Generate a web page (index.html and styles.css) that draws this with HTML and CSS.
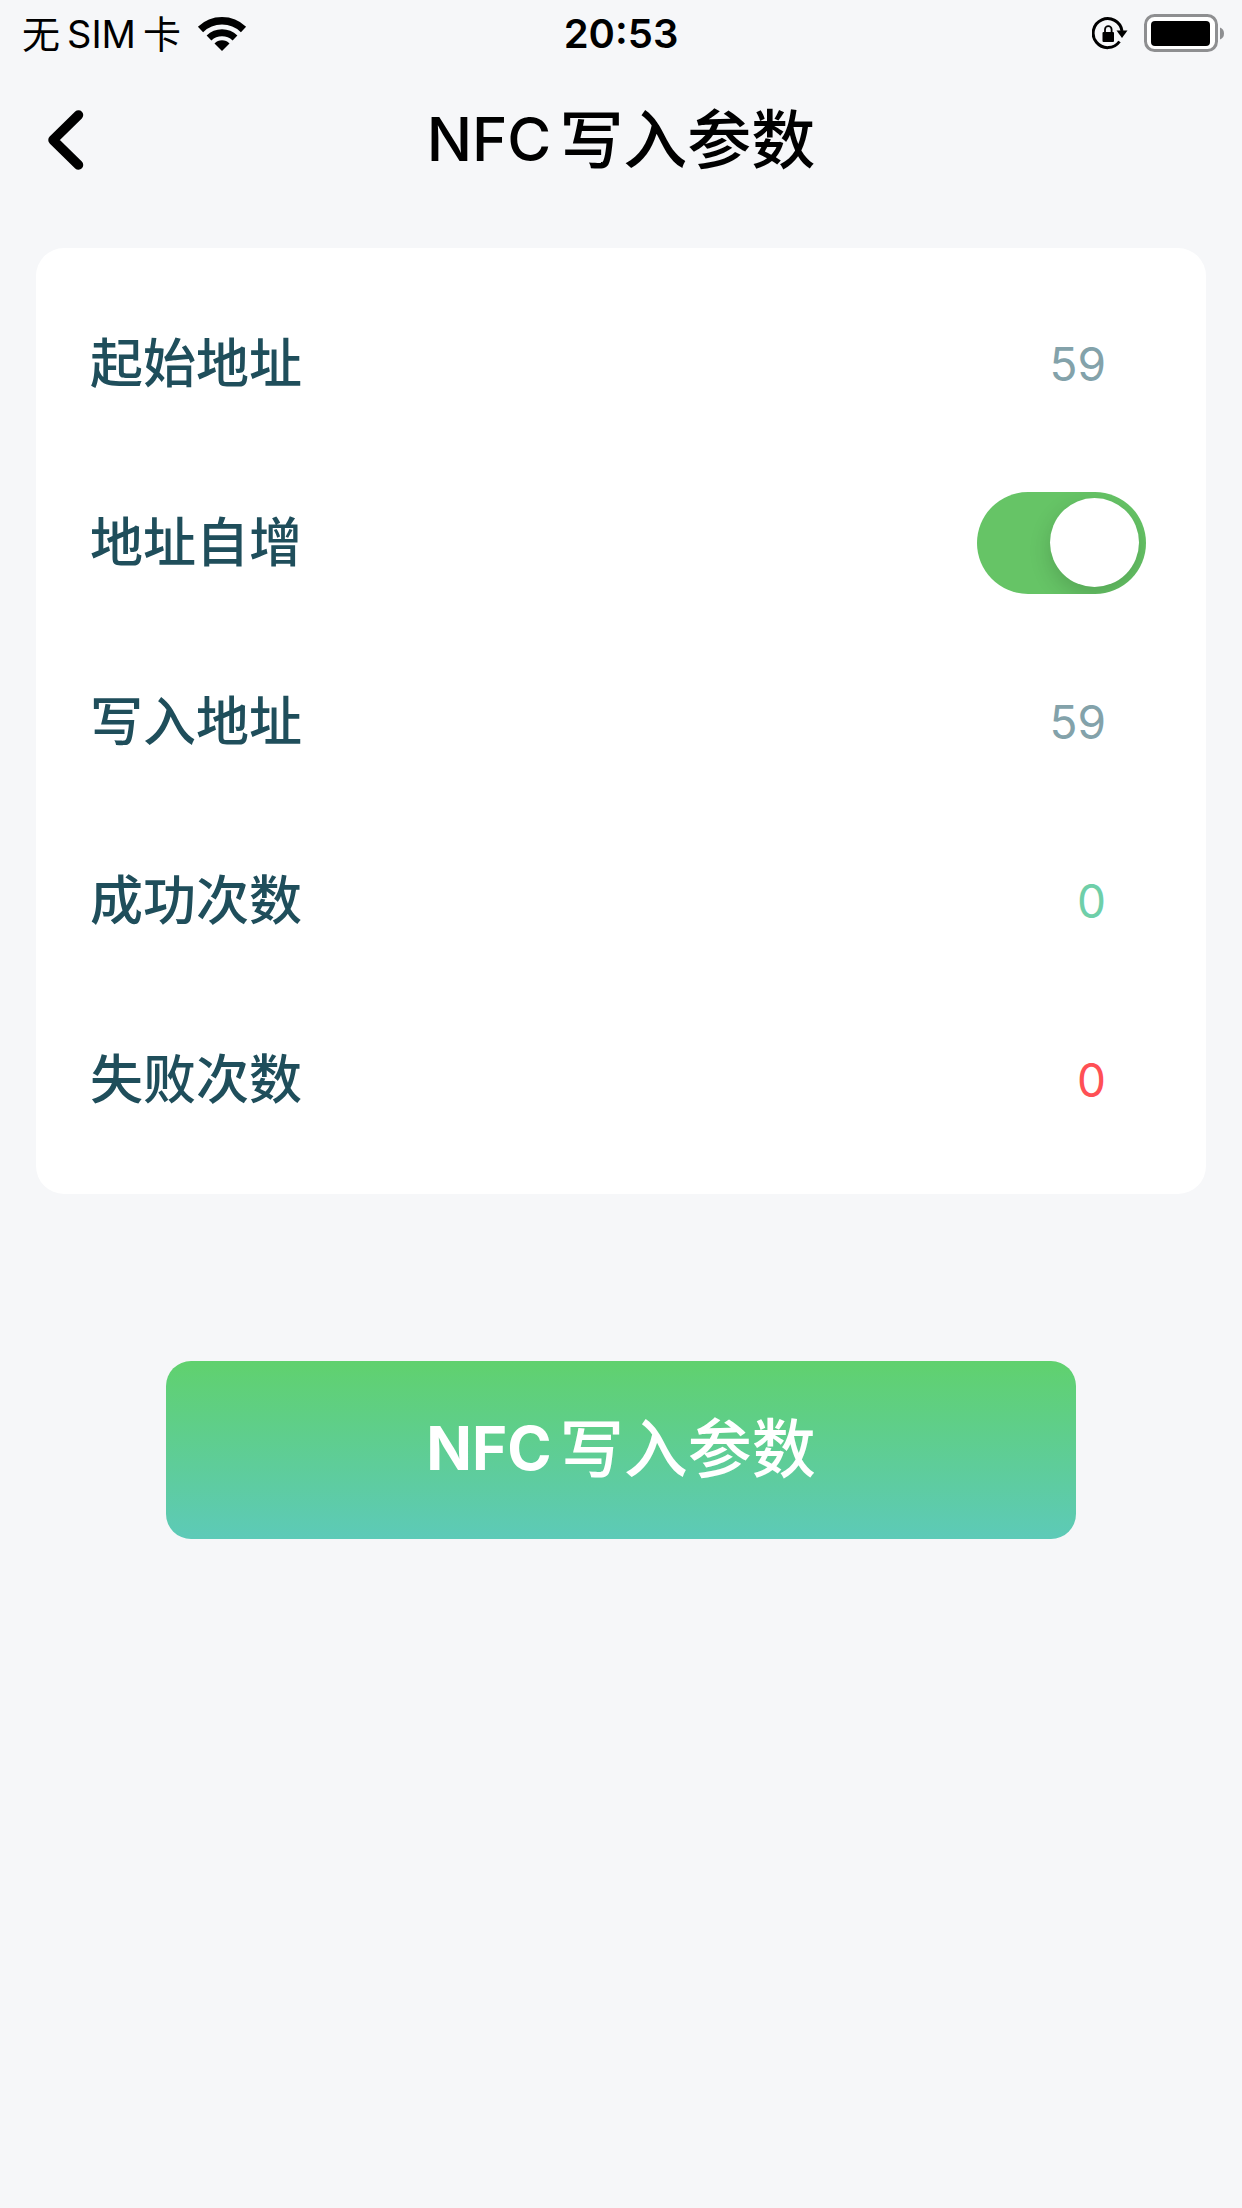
FILE: index.html
```html
<!DOCTYPE html>
<html lang="zh-CN">
<head>
    <meta charset="UTF-8">
    <meta name="viewport" content="width=device-width, initial-scale=1.0">
    <title>NFC写入参数</title>
    <link rel="stylesheet" href="styles.css">
</head>
<body>
    <div class="status-bar">
        <div class="status-left">
            <span class="carrier">无<span>SIM</span>卡</span>
            <svg width="50" height="38" viewBox="0 0 50 38" aria-hidden="true">
                <path d="M3.5 14.5A31 31 0 0 1 46.500 14.500" fill="none" stroke="#000" stroke-width="7.500"/>
                <path d="M12 23A19 19 0 0 1 38 23" fill="none" stroke="#000" stroke-width="7"/>
                <path d="M17.500 28.500A10.500 10.500 0 0 1 32.500 28.500L25 36z" fill="#000"/>
            </svg>
        </div>
        <span class="status-time">20:53</span>
        <div class="status-right">
            <svg width="36" height="34" viewBox="0 0 36 34" aria-hidden="true">
                <path d="M27.500 24.500A14.500 14.500 0 1 1 30 14" fill="none" stroke="#000" stroke-width="3"/>
                <path d="M24.500 13.500H35.500L30 21z" fill="#000"/>
                <rect x="10.500" y="15" width="11.500" height="10" rx="1" fill="#000"/>
                <path d="M13 16V12.500a3.300 3.300 0 0 1 6.600 0V16" fill="none" stroke="#000" stroke-width="1.800"/>
            </svg>
            <svg width="80" height="40" viewBox="0 0 80 40" aria-hidden="true">
                <rect x="1.500" y="1.500" width="71" height="35" rx="9" fill="#fff" stroke="#8e8f91" stroke-width="3"/>
                <rect x="7" y="7" width="59" height="25" rx="4" fill="#000"/>
                <path d="M76 13.500Q80 15 80 19.500T76 25.500z" fill="#8e8f91"/>
            </svg>
        </div>
    </div>

    <header class="nav-bar">
        <button class="back-button" type="button" aria-label="返回">
            <svg width="36" height="62" viewBox="0 0 36 62" aria-hidden="true">
                <path d="M30.500 6L5 31L30.500 56" fill="none" stroke="#000" stroke-width="9.500" stroke-linecap="round" stroke-linejoin="round"/>
            </svg>
        </button>
        <h1 class="nav-title"><span class="latin">NFC</span>写入参数</h1>
    </header>

    <form class="content">
        <div class="card">
            <div class="row">
                <label for="startAddress">起始地址</label>
                <input class="value" id="startAddress" type="text" inputmode="numeric" value="59">
            </div>
            <div class="row">
                <label for="autoIncrease">地址自增</label>
                <input class="switch" id="autoIncrease" type="checkbox" role="switch" checked>
            </div>
            <div class="row">
                <label for="writeAddress">写入地址</label>
                <output class="value" id="writeAddress">59</output>
            </div>
            <div class="row">
                <label for="successCount">成功次数</label>
                <output class="value success" id="successCount">0</output>
            </div>
            <div class="row">
                <label for="failCount">失败次数</label>
                <output class="value fail" id="failCount">0</output>
            </div>
        </div>

        <button class="write-button" type="button"><b class="latin">NFC</b>写入参数</button>
    </form>
</body>
</html>
```

FILE: styles.css
```css
* {
    box-sizing: border-box;
}
body {
    margin: 0;
    background: #f6f7f9;
    color: #000;
    font-family: Inter, "Noto Sans CJK SC", sans-serif;
}
button,
input {
    font-family: inherit;
}
svg {
    display: block;
}

/* 状态栏 */
.status-bar {
    display: grid;
    grid-template-columns: 1fr auto 1fr;
    align-items: center;
    height: 68px;
    padding: 0 18px;
    font-size: 38px;
    line-height: 48px;
}
.status-left,
.status-right {
    display: flex;
    align-items: center;
    gap: 16px;
}
.status-left {
    padding-left: 4px;
}
.status-right {
    justify-content: flex-end;
}
.carrier span {
    margin: 0 7px;
}
.status-time {
    font-size: 40px;
    font-weight: 600;
}

/* 导航栏 */
.nav-bar {
    display: grid;
    grid-template-columns: 120px 1fr 120px;
    align-items: center;
    height: 144px;
}
.back-button {
    justify-self: start;
    padding: 0 48px;
    border: none;
    background: none;
    cursor: pointer;
}
.nav-title {
    margin: 0;
    text-align: center;
    font-size: 64px;
    font-weight: 500;
    line-height: 80px;
}
.latin {
    margin-right: 8px;
    font-size: 60px;
    line-height: 1;
    vertical-align: 2px;
}

/* 参数卡片 */
.content {
    padding: 36px;
}
.card {
    padding: 26px 60px 25px 54px;
    border-radius: 28px;
    background: #fff;
}
.row {
    display: flex;
    align-items: center;
    justify-content: space-between;
    height: 179px;
    color: #1f4e5b;
    font-size: 53px;
    font-weight: 500;
    line-height: 72px;
}
.value {
    width: 50%;
    padding: 0 40px 0 0;
    border: none;
    outline: none;
    background: none;
    color: #83a2aa;
    font-size: 46px;
    font-weight: 400;
    line-height: 60px;
    text-align: right;
}
.success {
    color: #6fcfa9;
}
.fail {
    color: #ff5055;
}

/* 开关 */
.switch {
    display: flex;
    align-items: center;
    justify-content: flex-end;
    appearance: none;
    width: 169px;
    height: 102px;
    margin: 0;
    padding: 0 7px;
    overflow: hidden;
    border-radius: 51px;
    background: #66c466;
    cursor: pointer;
}
.switch::before {
    content: "";
    width: 89px;
    height: 89px;
    border-radius: 50%;
    background: #fff;
    box-shadow: 0 8px 22px rgba(0, 0, 0, 0.16);
}
.switch:not(:checked) {
    justify-content: flex-start;
    background: #e5e5ea;
}

/* 写入按钮 */
.write-button {
    display: block;
    width: calc(100% - 260px);
    height: 178px;
    margin: 167px auto 0;
    padding: 0 0 2px;
    border: none;
    border-radius: 25px;
    background: linear-gradient(#60d16e, #5dcab8);
    color: #fff;
    font-size: 64px;
    font-weight: 500;
    line-height: 80px;
    cursor: pointer;
}
.write-button b {
    font-weight: 700;
}
```
